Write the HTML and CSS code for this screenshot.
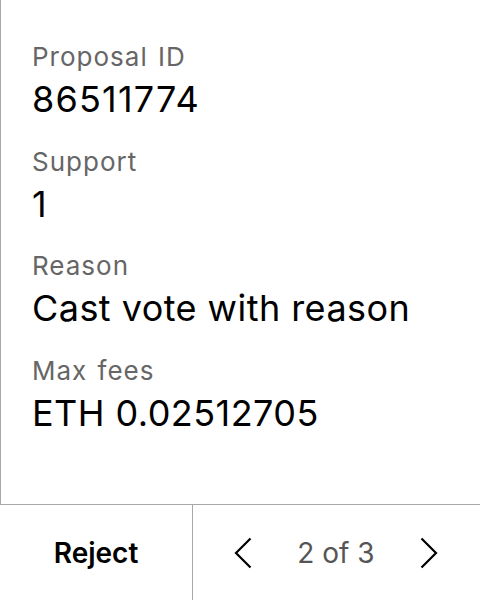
FILE: index.html
```html
<!DOCTYPE html>
<html>
<head>
<meta charset="utf-8">
<link rel="stylesheet" href="styles.css">
</head>
<body>
<div class="screen">
  <div class="card">
    <div class="field">
      <div class="label">Proposal ID</div>
      <div class="value num">86511774</div>
    </div>
    <div class="field">
      <div class="label">Support</div>
      <div class="value">1</div>
    </div>
    <div class="field">
      <div class="label">Reason</div>
      <div class="value">Cast vote with reason</div>
    </div>
    <div class="field">
      <div class="label">Max fees</div>
      <div class="value">ETH 0.02512705</div>
    </div>
  </div>
  <div class="footer">
    <div class="reject">Reject</div>
    <div class="nav">
      <svg class="chev" width="20" height="32" viewBox="0 0 20 32"><path d="M17.5 1.5 L3 16 L17.5 30.5" fill="none" stroke="#000" stroke-width="2.2"/></svg>
      <span class="page">2 of 3</span>
      <svg class="chev" width="20" height="32" viewBox="0 0 20 32"><path d="M2.5 1.5 L17 16 L2.5 30.5" fill="none" stroke="#000" stroke-width="2.2"/></svg>
    </div>
  </div>
</div>
</body>
</html>
```
FILE: styles.css
```css
html, body {
  margin: 0;
  padding: 0;
  background: #fff;
}
body {
  font-family: Inter, "Noto Sans", sans-serif;
  color: #000;
}
.screen {
  width: 480px;
  height: 600px;
  display: flex;
  flex-direction: column;
}
.card {
  height: 505px;
  box-sizing: border-box;
  border-left: 1px solid #a8a8a8;
  border-bottom: 1px solid #a8a8a8;
  padding: 41px 0 0 31px;
}
.field {
  height: 104.6px;
}
.label {
  font-size: 26px;
  line-height: 32px;
  letter-spacing: 1px;
  word-spacing: 2px;
  color: #666;
}
.value {
  margin-top: 6px;
  font-size: 36px;
  line-height: 40px;
  letter-spacing: 0.45px;
  color: #000;
}
.value.num {
  letter-spacing: 1.2px;
}
.footer {
  flex: 1;
  display: flex;
}
.reject {
  width: 192px;
  border-right: 1px solid #a8a8a8;
  display: flex;
  align-items: center;
  justify-content: center;
  font-weight: 600;
  font-size: 28px;
}
.nav {
  flex: 1;
  display: flex;
  align-items: center;
  justify-content: space-between;
  padding: 0 41px 0 40px;
}
.chev {
  display: block;
}
.page {
  font-size: 28px;
  color: #555;
}
```
